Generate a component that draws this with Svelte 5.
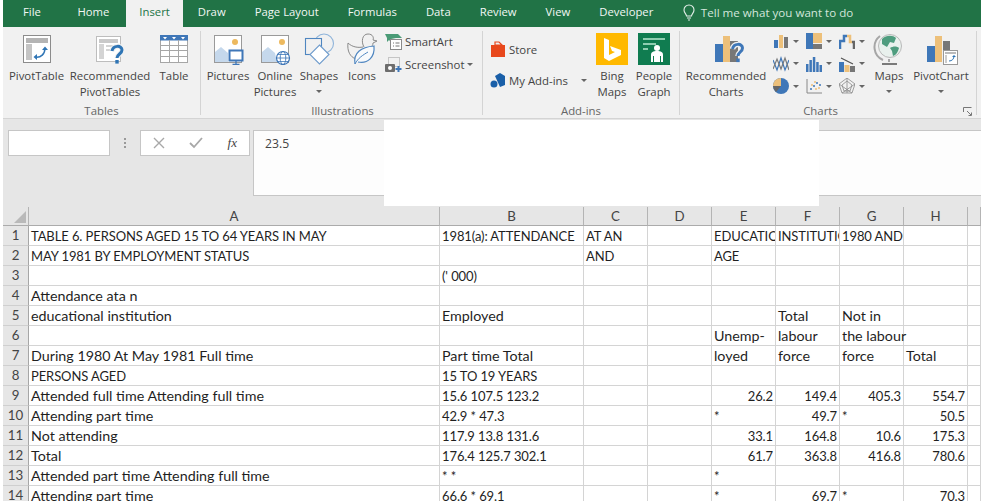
<script lang="ts">
  const tabs = ['File', 'Home', 'Insert', 'Draw', 'Page Layout', 'Formulas', 'Data', 'Review', 'View', 'Developer'];
  const cols = ['A', 'B', 'C', 'D', 'E', 'F', 'G', 'H', ''];

  const rows: string[][] = [
    ['TABLE 6. PERSONS AGED 15 TO 64 YEARS IN MAY', '1981(a): ATTENDANCE', 'AT AN', '', 'EDUCATIONAL', 'INSTITUTION', '1980 AND', ''],
    ['MAY 1981 BY EMPLOYMENT STATUS', '', 'AND', '', 'AGE', '', '', ''],
    ['', "(' 000)", '', '', '', '', '', ''],
    ['Attendance ata n', '', '', '', '', '', '', ''],
    ['educational institution', 'Employed', '', '', '', 'Total', 'Not in', ''],
    ['', '', '', '', 'Unemp-', 'labour', 'the labour', ''],
    ['During 1980 At May 1981 Full time', 'Part time Total', '', '', 'loyed', 'force', 'force', 'Total'],
    ['PERSONS AGED', '15 TO 19 YEARS', '', '', '', '', '', ''],
    ['Attended full time Attending full time', '15.6 107.5 123.2', '', '', '26.2', '149.4', '405.3', '554.7'],
    ['Attending part time', '42.9 * 47.3', '', '', '*', '49.7', '*', '50.5'],
    ['Not attending', '117.9 13.8 131.6', '', '', '33.1', '164.8', '10.6', '175.3'],
    ['Total', '176.4 125.7 302.1', '', '', '61.7', '363.8', '416.8', '780.6'],
    ['Attended part time Attending full time', '* *', '', '', '*', '', '', ''],
    ['Attending part time', '66.6 * 69.1', '', '', '*', '69.7', '*', '70.3'],
  ];

  const isNum = (c: string) => /^\d+\.\d$/.test(c);
  const isCompact = (c: string) => !/[a-z]{2}/.test(c);
</script>

<div class="window">
  <nav class="tabs">
    {#each tabs as t}
      <span class="tab" class:active={t === 'Insert'} class:file={t === 'File'}>{t}</span>
    {/each}
    <span class="tell">
      <svg width="14" height="17" viewBox="0 0 14 17" fill="none" stroke="#e4efe9" stroke-width="1.1"><path d="M4.5 12c0-2-2.500-3-2.500-6a5 5 0 0 1 10 0c0 3-2.500 4-2.500 6zM5 14h4M6 16h2"/></svg>
      Tell me what you want to do
    </span>
  </nav>

  <section class="ribbon">
    <div class="group tables">
      <div class="items">
        <div class="btn b-pivot">
          <svg width="30" height="32" viewBox="0 0 30 32"><rect x="1.500" y="2.500" width="27" height="27" fill="#fff" stroke="#8c8c8c"/><rect x="4" y="5" width="22" height="5" fill="#b4b4b4"/><rect x="4" y="11" width="6" height="16" fill="#c4c4c4"/><path d="M13 24c6 1 10-3 10-9" fill="none" stroke="#2f75b5" stroke-width="1.500"/><path d="M20 17l3-3.500 3 3.500zM15 21l-3.500 3 3.500 3z" fill="#2f75b5"/></svg>
          <span>PivotTable</span>
        </div>
        <div class="btn b-rec">
          <svg width="30" height="32" viewBox="0 0 30 32"><rect x="1.500" y="3.500" width="24" height="25" fill="#fff" stroke="#bdbdbd"/><rect x="4" y="6" width="19" height="4" fill="#c9c9c9"/><rect x="4" y="11" width="5" height="15" fill="#d4d4d4"/><rect x="11" y="12" width="10" height="2" fill="#d4d4d4"/><rect x="11" y="16" width="7" height="2" fill="#d4d4d4"/><path d="M17 18c1-6 10-6 10-1 0 4-5 4-5 8" fill="none" stroke="#f1f1f1" stroke-width="5"/><path d="M17 18c1-6 10-6 10-1 0 4-5 4-5 8" fill="none" stroke="#2f75b5" stroke-width="3"/><rect x="20.300" y="27" width="3.400" height="3.600" fill="#2f75b5"/></svg>
          <span>Recommended PivotTables</span>
        </div>
        <div class="btn b-table">
          <svg width="30" height="32" viewBox="0 0 30 32"><rect x="1.500" y="2.500" width="27" height="27" fill="#fff" stroke="#a6a6a6"/><rect x="1" y="2" width="28" height="5.500" fill="#3f77b8"/><path d="M4 4h4l-2 2.500zM13 4h4l-2 2.500zM22 4h4l-2 2.500z" fill="#fff"/><path d="M1 12.500h28M1 17.500h28M1 23.500h28M10.500 7v23M19.500 7v23" stroke="#a6a6a6"/></svg>
          <span>Table</span>
        </div>
      </div>
      <div class="label">Tables</div>
    </div>
    <i class="sep"></i>

    <div class="group illus">
      <div class="items">
        <div class="btn b-pics">
          <svg width="32" height="32" viewBox="0 0 32 32"><rect x="2.500" y="2.500" width="27" height="27" fill="#fff" stroke="#9a9a9a"/><circle cx="23" cy="9" r="3" fill="#edb95e"/><path d="M3 29V19l6-5 7 6v9z" fill="#c5d8ec"/><rect x="17.500" y="17.500" width="13" height="10" fill="#fff" stroke="#3f77b8" stroke-width="2"/><path d="M24 28v3M20.500 31.500h7" stroke="#3f77b8" stroke-width="1.300"/></svg>
          <span>Pictures</span>
        </div>
        <div class="btn b-online">
          <svg width="32" height="32" viewBox="0 0 32 32"><rect x="2.500" y="2.500" width="27" height="27" fill="#fff" stroke="#9a9a9a"/><circle cx="23" cy="9" r="3" fill="#edb95e"/><path d="M3 29V19l6-5 7 6 2 9z" fill="#c5d8ec"/><circle cx="24" cy="25" r="6.500" fill="#fff" stroke="#3f77b8" stroke-width="1.200"/><ellipse cx="24" cy="25" rx="2.800" ry="6.500" fill="none" stroke="#3f77b8" stroke-width=".9"/><path d="M17.500 25h13M18.500 21.500h11M18.500 28.500h11" stroke="#3f77b8" stroke-width=".8"/></svg>
          <span>Online Pictures</span>
        </div>
        <div class="btn b-shapes">
          <svg width="32" height="32" viewBox="0 0 32 32" fill="none" stroke="#4f86c0" stroke-width="1.100"><circle cx="21" cy="10.500" r="9.500" stroke="#8fb4da"/><rect x="2.500" y="5.500" width="16" height="16" fill="#f1f1f1"/><path d="M16.500 12l9.500 9.500-9.500 9.500L7 21.500z" fill="#fff" stroke="#6f9ccc"/></svg>
          <i class="caret low"></i>
          <span>Shapes</span>
        </div>
        <div class="btn b-icons">
          <svg width="32" height="32" viewBox="0 0 32 32" fill="none"><path d="M18 14C15 9 16 1 22 1c5 0 6 4 5 6l4 1-4 2c0 2-1 3-2 4M17 14c-5 1-11 0-15-4-1 8 2 14 8 16" stroke="#8a8a8a" stroke-width="1"/><path d="M9 31c-2-11 6-17 19-18 1 11-6 18-16 16" fill="#f8fafc" stroke="#4f86c0" stroke-width="1.200"/><path d="M9 31c3-6 8-9 13-12" stroke="#4f86c0"/></svg>
          <span>Icons</span>
        </div>
        <div class="stack s-illus">
          <div class="row">
            <svg width="17" height="17" viewBox="0 0 17 17"><path d="M0 1h13l4 4h-6l-5 1v3L4 7 2 9V5z" fill="#4a9a76"/><rect x="5.500" y="6.500" width="11" height="10" fill="#fff" stroke="#8a8a8a"/><path d="M8 10h1M8 13h1M10.500 10h4M10.500 13h4" stroke="#777"/></svg>
            <span>SmartArt</span>
          </div>
          <div class="row">
            <svg width="17" height="17" viewBox="0 0 17 17"><rect x="3.500" y="1.500" width="11" height="9" fill="none" stroke="#999" stroke-dasharray="1 1"/><rect x="0" y="8" width="10" height="8" rx="1" fill="#6d6d6d"/><circle cx="5" cy="12" r="2" fill="#fff"/><path d="M13.500 10v6M10.500 13h6" stroke="#3f77b8" stroke-width="2"/></svg>
            <span>Screenshot</span>
            <i class="caret"></i>
          </div>
        </div>
      </div>
      <div class="label">Illustrations</div>
    </div>
    <i class="sep"></i>

    <div class="group addins">
      <div class="items">
        <div class="stack s-add">
          <div class="row">
            <svg width="16" height="18" viewBox="0 0 16 18"><path d="M1 5h14v12H1z" fill="#e8481c"/><path d="M5 5V2h4l3 3z" fill="none" stroke="#e8481c" stroke-width="1.200"/></svg>
            <span>Store</span>
          </div>
          <div class="row">
            <svg width="16" height="18" viewBox="0 0 16 18"><circle cx="4" cy="13" r="3.500" fill="#1a5fa8"/><path d="M5 5l5-3 5 3v9l-5 2z" fill="#1a5fa8"/></svg>
            <span class="wide">My Add-ins</span>
            <i class="caret"></i>
          </div>
        </div>
        <div class="btn b-bing">
          <svg width="32" height="32" viewBox="0 0 32 32"><rect width="32" height="32" fill="#ffb900"/><path d="M8 5l5 2v15l6-3-3-1-2-5 11 4v5l-12 6-5-3z" fill="#fff"/></svg>
          <span>Bing Maps</span>
        </div>
        <div class="btn b-people">
          <svg width="32" height="32" viewBox="0 0 32 32"><rect width="32" height="32" fill="#107c50"/><path d="M5 6h22M5 11h13M5 16h5" stroke="#8fcdb0" stroke-width="2"/><circle cx="19" cy="15" r="3" fill="#fff"/><path d="M13 29v-7c0-3 2-4 6-4s6 1 6 4v7h-2v-6h-1v6h-6v-6h-1v6z" fill="#fff"/></svg>
          <span>People Graph</span>
        </div>
      </div>
      <div class="label">Add-ins</div>
    </div>
    <i class="sep"></i>

    <div class="group charts">
      <div class="items">
        <div class="btn b-recchart">
          <svg width="36" height="32" viewBox="0 0 36 32"><rect x="7" y="11" width="8" height="18" fill="#3f77b8"/><rect x="15" y="3" width="7" height="26" fill="#edc07a"/><rect x="22" y="8" width="8" height="21" fill="#777"/><path d="M24.500 16c1-6 10-6 10-1 0 4-4.500 4-4.500 8" fill="none" stroke="#f1f1f1" stroke-width="5.500"/><path d="M24.500 16c1-6 10-6 10-1 0 4-4.500 4-4.500 8" fill="none" stroke="#3f77b8" stroke-width="3"/><rect x="28.300" y="25.500" width="3.400" height="3.600" fill="#3f77b8"/></svg>
          <span>Recommended Charts</span>
        </div>
        <div class="chartgrid">
          <div class="mini">
            <svg width="16" height="16" viewBox="0 0 16 16"><rect x="1" y="7" width="4" height="8" fill="#3f77b8"/><rect x="6" y="2" width="4" height="13" fill="#edc07a"/><rect x="11" y="4" width="4" height="11" fill="#777"/></svg><i class="caret"></i>
          </div>
          <div class="mini">
            <svg width="16" height="16" viewBox="0 0 16 16"><rect x="0" y="0" width="7" height="16" fill="#3f77b8"/><rect x="7" y="0" width="9" height="10" fill="#edc07a"/><rect x="7" y="11" width="9" height="5" fill="#777"/></svg><i class="caret"></i>
          </div>
          <div class="mini">
            <svg width="16" height="16" viewBox="0 0 16 16" fill="none" stroke-width="2.500"><path d="M1 16V8h4V3h3" stroke="#3f77b8"/><path d="M8 3h3v6h2" stroke="#edc07a"/><path d="M13 9h2v7" stroke="#666"/></svg><i class="caret"></i>
          </div>
          <div class="mini">
            <svg width="16" height="16" viewBox="0 0 16 16" fill="none" stroke-width="1.200"><path d="M0 4l4 10 4-12 4 12 4-10" stroke="#3f77b8"/><path d="M0 13l4-10 4 10 4-11 4 12" stroke="#7a7a7a"/></svg><i class="caret"></i>
          </div>
          <div class="mini">
            <svg width="16" height="16" viewBox="0 0 16 16" fill="#3f77b8"><rect x="0" y="8" width="2.500" height="8"/><rect x="3.400" y="4" width="2.500" height="12"/><rect x="6.800" y="1" width="2.500" height="15"/><rect x="10.200" y="6" width="2.500" height="10"/><rect x="13.500" y="9" width="2.500" height="7"/></svg><i class="caret"></i>
          </div>
          <div class="mini">
            <svg width="16" height="16" viewBox="0 0 16 16"><rect x="0" y="6" width="5" height="10" fill="#3f77b8"/><rect x="5.500" y="9" width="5" height="7" fill="#edc07a"/><rect x="11" y="10" width="5" height="6" fill="#777"/><path d="M2 2l6 3 6 3" stroke="#555" stroke-width="1.200" fill="none"/></svg><i class="caret"></i>
          </div>
          <div class="mini">
            <svg width="16" height="16" viewBox="0 0 16 16"><circle cx="8" cy="8" r="8" fill="#3f77b8"/><path d="M8 8V0A8 8 0 0 0 0 8z" fill="#edc07a"/><path d="M8 8H0a8 8 0 0 0 3 6z" fill="#666"/></svg><i class="caret"></i>
          </div>
          <div class="mini">
            <svg width="16" height="16" viewBox="0 0 16 16"><path d="M1 1v14h15" fill="none" stroke="#888"/><path d="M4 11h2M7 8h2M10 5h2M13 7h2" stroke="#3f77b8" stroke-width="1.500"/><path d="M5 7h2M9 11h2M12 10h2M8 4h2" stroke="#edc07a" stroke-width="1.500"/></svg><i class="caret"></i>
          </div>
          <div class="mini">
            <svg width="16" height="16" viewBox="0 0 16 16" fill="none" stroke="#8a8a8a" stroke-width=".8"><path d="M8 0l8 6-3 9H3L0 6zM8 3l5 4-2 6H5L3 7zM8 0v15M0 6l13 9M16 6L3 15"/></svg><i class="caret"></i>
          </div>
        </div>
        <div class="btn b-maps">
          <svg width="32" height="32" viewBox="0 0 32 32"><circle cx="17" cy="13" r="11.500" fill="#e9f1ed" stroke="#b9b9b9"/><path d="M9 6c4-4 11-4 14-1l-2 5-4-1-3 5-5-3zM17 15c3-2 7-2 9 0-1 4-3 7-6 8l-1-5z" fill="#4f9d7f"/><path d="M7 3a14 14 0 0 0 3 24M16 26v3" fill="none" stroke="#a6a6a6" stroke-width="2"/><path d="M9 31h15" stroke="#7a7a7a" stroke-width="2"/></svg>
          <i class="caret low"></i>
          <span>Maps</span>
        </div>
        <div class="btn b-pchart">
          <svg width="34" height="32" viewBox="0 0 34 32"><rect x="3" y="13" width="8" height="16" fill="#3f77b8"/><rect x="11" y="3" width="7" height="26" fill="#edc07a"/><rect x="19" y="8" width="7" height="21" fill="#777"/><rect x="19.500" y="17.500" width="14" height="14" fill="#fff" stroke="#999"/><rect x="21" y="19" width="11" height="2" fill="#bbb"/><rect x="21" y="22" width="2" height="8" fill="#ccc"/><path d="M25 28c3 0 5-2 5-5" fill="none" stroke="#2f75b5"/><path d="M28 24l2-2 2 2z" fill="#2f75b5"/></svg>
          <i class="caret low"></i>
          <span>PivotChart</span>
        </div>
      </div>
      <div class="label">Charts</div>
      <svg class="launcher" width="9" height="9" viewBox="0 0 9 9" fill="none" stroke="#777"><path d="M.5 5V.5H8.500M4 4l4 4M5.500 8.500h3v-3"/></svg>
    </div>
    <i class="sep"></i>
  </section>

  <section class="formula">
    <div class="namebox"></div>
    <span class="grip"></span>
    <div class="fnbox">
      <svg width="12" height="12" viewBox="0 0 12 12" stroke="#a8a8a8" stroke-width="1.400"><path d="M1 1l10 10M11 1L1 11"/></svg>
      <svg width="14" height="12" viewBox="0 0 14 12" fill="none" stroke="#a8a8a8" stroke-width="1.800"><path d="M1 6l4 4 8-9"/></svg>
      <span class="fx">fx</span>
    </div>
    <div class="input">23.5</div>
    <div class="patch"></div>
  </section>

  <section class="sheet">
    <div class="hd corner"><i></i></div>
    {#each cols as c}
      <div class="hd">{c}</div>
    {/each}
    {#each rows as row, i}
      <div class="hd num">{i + 1}</div>
      {#each row as c, j}
        <div class="cell" class:right={isNum(c)} class:compact={isCompact(c)} class:spill={c !== '' && row[j + 1] === ''}>{c}</div>
      {/each}
      <div class="cell"></div>
    {/each}
  </section>
</div>

<style>
  :global(body) {
    margin: 0;
    background: #fff;
  }
  .window {
    width: 978px;
    height: 501px;
    margin-left: 3px;
    overflow: hidden;
    font-family: "Open Sans", "Noto Sans", sans-serif;
    font-size: 11.400px;
    color: #444;
    position: relative;
  }
  .window i {
    display: block;
  }

  /* tabs */
  .tabs {
    display: flex;
    height: 27px;
    background: #217346;
    color: #f2f7f4;
    align-items: stretch;
  }
  .tab {
    padding: 0 14.500px;
    line-height: 24px;
    white-space: nowrap;
    font-size: 11.300px;
  }
  .tab.file {
    padding: 0 22px 0 20px;
  }
  .tab.active {
    background: #f1f1f1;
    color: #217346;
    padding: 0 13.500px;
    margin-left: 2px;
  }
  .tell {
    display: flex;
    align-items: center;
    gap: 5px;
    margin-left: 14px;
    height: 24px;
    color: #d3e6dc;
    font-size: 11.600px;
    white-space: nowrap;
  }

  /* ribbon */
  .ribbon {
    display: flex;
    height: 91px;
    background: #f1f1f1;
    border-bottom: 1px solid #d4d4d4;
    align-items: flex-start;
  }
  .group {
    position: relative;
    height: 91px;
    display: flex;
    flex-direction: column;
    flex-shrink: 0;
  }
  .items {
    display: flex;
    height: 77px;
    padding-top: 6px;
    box-sizing: border-box;
  }
  .label {
    text-align: center;
    line-height: 14px;
    color: #666;
  }
  .sep {
    width: 1px;
    height: 84px;
    margin-top: 4px;
    background: #d4d4d4;
    flex-shrink: 0;
  }
  .tables { width: 197px; }
  .illus { width: 281px; padding-left: 2px; box-sizing: border-box; }
  .addins { width: 196px; }
  .charts { width: 296px; padding-left: 3px; padding-right: 18px; box-sizing: border-box; }
  .launcher {
    position: absolute;
    right: 4px;
    bottom: 2px;
  }

  .btn {
    position: relative;
    display: flex;
    flex-direction: column;
    align-items: center;
    flex-shrink: 0;
    text-align: center;
    line-height: 16px;
  }
  .btn svg {
    height: 32px;
    flex-shrink: 0;
    margin-bottom: 3px;
  }
  .b-pivot { width: 67px; }
  .b-rec { width: 80px; }
  .b-table { width: 48px; }
  .b-pics { width: 50px; }
  .b-online { width: 44px; }
  .b-shapes { width: 44px; }
  .b-icons { width: 42px; }
  .b-bing { width: 44px; }
  .b-people { width: 40px; }
  .b-recchart { width: 86px; }
  .b-maps { width: 42px; }
  .b-pchart { width: 62px; }
  .b-rec span, .b-recchart span, .b-online span {
    margin: 0 -6px;
  }

  .caret {
    width: 0;
    height: 0;
    border-left: 3px solid transparent;
    border-right: 3px solid transparent;
    border-top: 3px solid #666;
    flex-shrink: 0;
  }
  .caret.low {
    position: absolute;
    top: 57px;
    left: calc(50% - 3px);
  }

  .stack {
    display: flex;
    flex-direction: column;
    flex-shrink: 0;
  }
  .row {
    display: flex;
    align-items: center;
    gap: 3px;
    white-space: nowrap;
  }
  .s-illus {
    margin-left: 2px;
    gap: 6px;
  }
  .s-illus .row {
    height: 17px;
  }
  .s-add {
    width: 107px;
    padding: 7px 0 0 7px;
    box-sizing: border-box;
    gap: 13px;
  }
  .s-add .row {
    height: 18px;
  }
  .s-add .wide {
    width: 69px;
  }

  .chartgrid {
    display: grid;
    grid-template-columns: repeat(3, 33px);
    grid-auto-rows: 22.700px;
    width: 95px;
    margin-left: 4px;
    flex-shrink: 0;
  }
  .mini {
    display: flex;
    align-items: center;
    gap: 4px;
    height: 16px;
  }

  /* formula bar */
  .formula {
    position: relative;
    display: flex;
    align-items: flex-start;
    height: 88px;
    padding: 11px 0 0 5px;
    box-sizing: border-box;
    background: #e6e6e6;
  }
  .namebox {
    width: 100px;
    height: 24px;
    background: #fff;
    border: 1px solid #c6c6c6;
  }
  .grip {
    width: 2px;
    height: 10px;
    margin: 8px 14px 0 14px;
    background: repeating-linear-gradient(#999 0 2px, transparent 2px 4px);
  }
  .fnbox {
    display: flex;
    align-items: center;
    justify-content: space-between;
    width: 110px;
    height: 26px;
    padding: 0 12px;
    box-sizing: border-box;
    background: #fff;
    border: 1px solid #c6c6c6;
  }
  .fx {
    font-family: "Liberation Serif", serif;
    font-style: italic;
    font-size: 13px;
    color: #444;
  }
  .input {
    width: 728px;
    height: 66px;
    margin-left: 3px;
    padding: 4px 11px;
    box-sizing: border-box;
    background: #fdfdfd;
    border: 1px solid #c6c6c6;
    border-right: 0;
    color: #444;
    font-size: 12.200px;
    line-height: 18px;
  }
  .patch {
    position: absolute;
    left: 381px;
    top: 1px;
    width: 435px;
    height: 86px;
    background: #fff;
  }

  /* sheet */
  .sheet {
    display: grid;
    grid-template-columns: 26px 411px 144px repeat(6, 64px) 13px;
    grid-template-rows: 19px;
    grid-auto-rows: 20px;
    font-family: Lato, "Liberation Sans", sans-serif;
    font-size: 14.300px;
    line-height: 19px;
    color: #1f1f1f;
  }
  .hd {
    box-sizing: border-box;
    background: #e6e6e6;
    border-right: 1px solid #b4b4b4;
    border-bottom: 1px solid #ababab;
    text-align: center;
    color: #444;
    font-size: 13.300px;
    line-height: 18px;
  }
  .hd.num {
    line-height: 19px;
    border-bottom-color: #cfcfcf;
    border-right-color: #a6a6a6;
  }
  .corner {
    position: relative;
  }
  .corner i {
    position: absolute;
    right: 2px;
    bottom: 2px;
    width: 0;
    height: 0;
    border-left: 12px solid transparent;
    border-bottom: 12px solid #b9b9b9;
  }
  .cell {
    box-sizing: border-box;
    padding: 0 2px;
    border-right: 1px solid #d4d4d4;
    border-bottom: 1px solid #d4d4d4;
    background: #fff;
    white-space: nowrap;
    overflow: hidden;
  }
  .cell.compact {
    padding-top: 1px;
    font-size: 13px;
    letter-spacing: -.100px;
  }
  .cell.spill {
    overflow: visible;
    position: relative;
    z-index: 1;
    background: transparent;
  }
  .cell.right {
    text-align: right;
  }
</style>
